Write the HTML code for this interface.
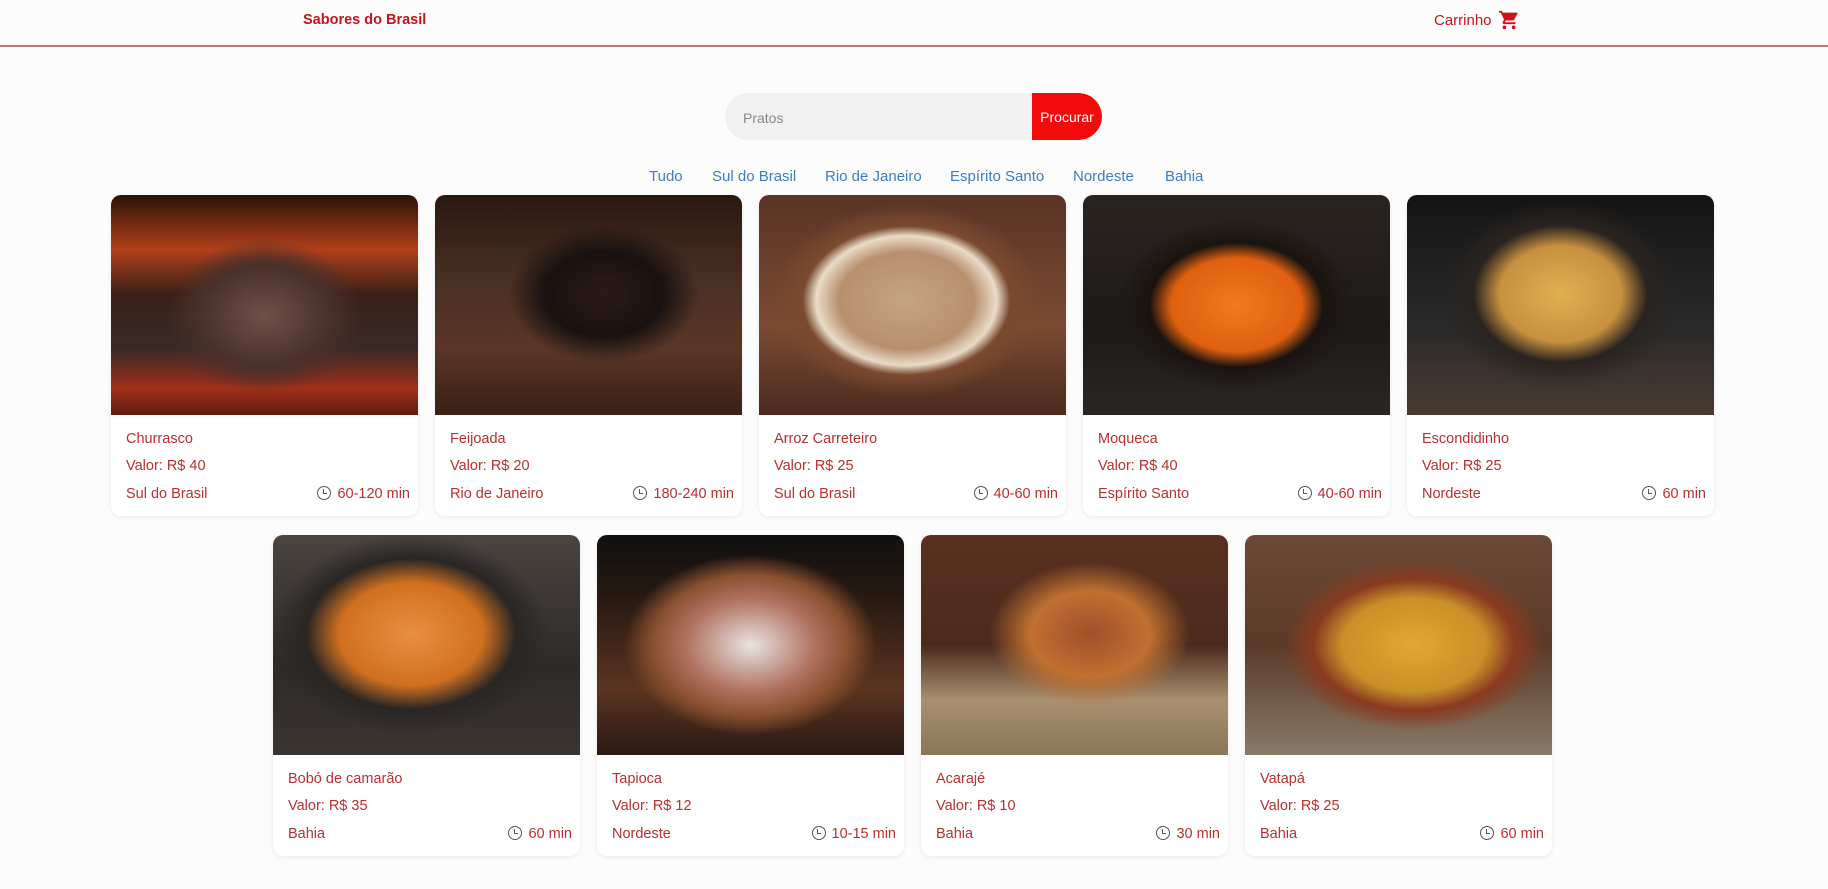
<!DOCTYPE html>
<html><head><meta charset="utf-8"><style>
*{margin:0;padding:0;box-sizing:border-box}
body{width:1828px;height:889px;background:#fdfcfc;font-family:"Liberation Sans",sans-serif;position:relative;overflow:hidden}
.hdr{position:absolute;left:0;top:0;width:1828px;height:47px;border-bottom:2px solid #c9737a}
.logo{position:absolute;left:303px;top:12px;color:#c3141c;font-weight:bold;font-size:14.5px}
.cart{position:absolute;left:1434px;top:12px;color:#c3141c;font-size:15px}
.cart svg{position:absolute;left:64px;top:-3px}
.search{position:absolute;left:725px;top:93px;width:377px;height:47px;border-radius:24px;background:#f1f1f1;overflow:hidden}
.search span{position:absolute;left:18px;top:17px;color:#888;font-size:14px}
.search b{position:absolute;right:0;top:0;width:70px;height:47px;background:#f30a0a;color:#fff;font-weight:normal;font-size:14px;line-height:49px;text-align:center;border-radius:0 24px 24px 0}
.filt{position:absolute;top:168px;color:#3d7cc2;font-size:15px}
.card{position:absolute;width:307px;height:321px;background:#fff;border-radius:10px;box-shadow:0 1px 5px rgba(0,0,0,.08);overflow:hidden}
.img{height:220px}
.t{position:absolute;left:15px;color:#b8302f;font-size:14.5px}
.tm{position:absolute;right:8px;top:291px;color:#b8302f;font-size:14.5px}
.tm i{display:inline-block;width:14px;height:14px;border:1.6px solid #555;border-radius:50%;vertical-align:-2px;margin-right:6px;position:relative}
.tm i:after{content:"";position:absolute;left:4.5px;top:1.5px;width:3px;height:4px;border-left:1.5px solid #555;border-bottom:1.5px solid #555}
</style></head><body>
<div class="hdr"><div class="logo">Sabores do Brasil</div>
<div class="cart">Carrinho<svg width="22" height="22" viewBox="0 0 24 24"><path fill="#d0101a" d="M7 18a2 2 0 1 0 0 4 2 2 0 0 0 0-4zm10 0a2 2 0 1 0 0 4 2 2 0 0 0 0-4zM1 2v2h2l3.6 7.6-1.4 2.4c-.6 1.2.3 2.5 1.6 2.5H19v-2H7.4l1.1-2h7.5c.8 0 1.4-.4 1.7-1l3.6-6.5A1 1 0 0 0 20.4 4H5.2l-.9-2H1z"/></svg></div></div>
<div class="search"><span>Pratos</span><b>Procurar</b></div>
<div class="filt" style="left:649px">Tudo</div>
<div class="filt" style="left:712px">Sul do Brasil</div>
<div class="filt" style="left:825px">Rio de Janeiro</div>
<div class="filt" style="left:950px">Espírito Santo</div>
<div class="filt" style="left:1073px">Nordeste</div>
<div class="filt" style="left:1165px">Bahia</div>

<div class="card" style="left:111px;top:195px"><div class="img" style="background:radial-gradient(ellipse at 50% 55%,#6e5048 0,#4a302a 30%,transparent 45%),linear-gradient(#2a1208 0,#b2401a 25%,#3a2018 45%,#3a2a26 70%,#a0301a 88%,#601a10 100%)"></div>
<div class="t" style="top:236px">Churrasco</div><div class="t" style="top:263px">Valor: R$ 40</div><div class="t" style="top:291px">Sul do Brasil</div><div class="tm"><i></i>60-120 min</div></div>

<div class="card" style="left:435px;top:195px"><div class="img" style="background:radial-gradient(ellipse at 55% 45%,#2a1a16 0,#1a1210 25%,transparent 40%),linear-gradient(#2a1810 0,#4a3024 40%,#5a3626 70%,#3a2016 100%)"></div>
<div class="t" style="top:236px">Feijoada</div><div class="t" style="top:263px">Valor: R$ 20</div><div class="t" style="top:291px">Rio de Janeiro</div><div class="tm"><i></i>180-240 min</div></div>

<div class="card" style="left:759px;top:195px"><div class="img" style="background:radial-gradient(ellipse at 48% 48%,#c4a482 0,#b89070 30%,#e8dcc8 40%,#7a4a30 46%,transparent 60%),linear-gradient(#5a3426,#7a4a32 60%,#4a2a1e)"></div>
<div class="t" style="top:236px">Arroz Carreteiro</div><div class="t" style="top:263px">Valor: R$ 25</div><div class="t" style="top:291px">Sul do Brasil</div><div class="tm"><i></i>40-60 min</div></div>

<div class="card" style="left:1083px;top:195px"><div class="img" style="background:radial-gradient(ellipse at 50% 50%,#f07a20 0,#e06010 30%,#1a1410 40%,transparent 55%),linear-gradient(#2a2420,#1e1a18 60%,#2a2624)"></div>
<div class="t" style="top:236px">Moqueca</div><div class="t" style="top:263px">Valor: R$ 40</div><div class="t" style="top:291px">Espírito Santo</div><div class="tm"><i></i>40-60 min</div></div>

<div class="card" style="left:1407px;top:195px"><div class="img" style="background:radial-gradient(ellipse at 50% 45%,#e0b050 0,#c89040 28%,#2a2420 40%,transparent 55%),linear-gradient(#141414,#2a2a2a 60%,#4a3a30)"></div>
<div class="t" style="top:236px">Escondidinho</div><div class="t" style="top:263px">Valor: R$ 25</div><div class="t" style="top:291px">Nordeste</div><div class="tm"><i></i>60 min</div></div>

<div class="card" style="left:273px;top:535px"><div class="img" style="background:radial-gradient(ellipse at 45% 45%,#e89040 0,#d07020 30%,#2a2624 44%,transparent 58%),linear-gradient(#4a4440,#2e2a28 60%,#3a3430)"></div>
<div class="t" style="top:236px">Bobó de camarão</div><div class="t" style="top:263px">Valor: R$ 35</div><div class="t" style="top:291px">Bahia</div><div class="tm"><i></i>60 min</div></div>

<div class="card" style="left:597px;top:535px"><div class="img" style="background:radial-gradient(ellipse at 50% 50%,#e8e4e0 0,#b07060 30%,#8a5030 45%,transparent 58%),linear-gradient(#101010,#2a1a12 30%,#5a3420 70%,#2a1a14)"></div>
<div class="t" style="top:236px">Tapioca</div><div class="t" style="top:263px">Valor: R$ 12</div><div class="t" style="top:291px">Nordeste</div><div class="tm"><i></i>10-15 min</div></div>

<div class="card" style="left:921px;top:535px"><div class="img" style="background:radial-gradient(ellipse at 55% 45%,#a0502a 0,#c07030 25%,transparent 42%),linear-gradient(#5a3020,#4a2a1c 50%,#a89070 75%,#8a7658)"></div>
<div class="t" style="top:236px">Acarajé</div><div class="t" style="top:263px">Valor: R$ 10</div><div class="t" style="top:291px">Bahia</div><div class="tm"><i></i>30 min</div></div>

<div class="card" style="left:1245px;top:535px"><div class="img" style="background:radial-gradient(ellipse at 55% 50%,#e0a830 0,#c89028 30%,#8a3a20 42%,transparent 55%),linear-gradient(#6a4a36,#5a3a28 50%,#8a7a68)"></div>
<div class="t" style="top:236px">Vatapá</div><div class="t" style="top:263px">Valor: R$ 25</div><div class="t" style="top:291px">Bahia</div><div class="tm"><i></i>60 min</div></div>
</body></html>
